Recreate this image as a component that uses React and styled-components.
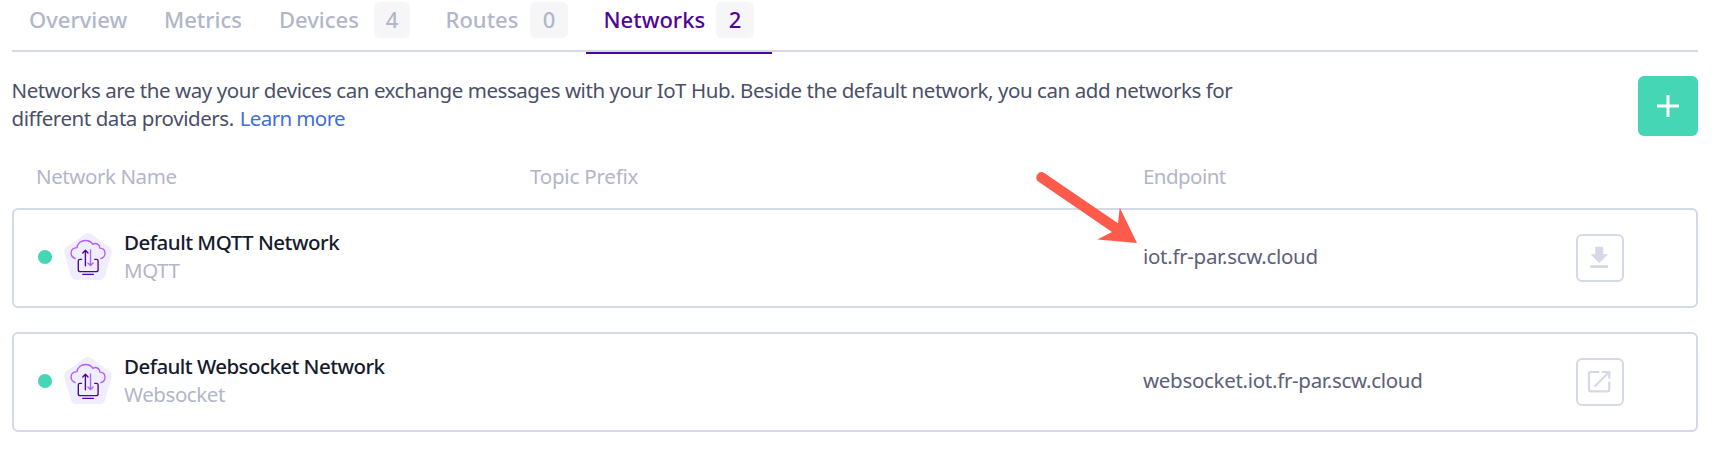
import React from "react";
import styled, { createGlobalStyle } from "styled-components";

const GlobalStyle = createGlobalStyle`
  * { box-sizing: border-box; }
  body {
    margin: 0;
    background: #fff;
    font-family: "Noto Sans", "Open Sans", sans-serif;
    font-size: 20.5px;
    line-height: 28px;
    letter-spacing: -0.44px;
    color: #4a4f68;
  }
`;

const Page = styled.main`
  position: relative;
  width: 1714px;
  height: 452px;
  padding: 0 16px 0 12px;
  overflow: hidden;
`;

const TabList = styled.nav`
  display: grid;
  grid-template-columns: 134px 115px 167px 158px 186px;
  height: 52px;
  border-bottom: 2px solid #d4d9e8;
`;

const Tab = styled.a`
  display: flex;
  align-items: center;
  justify-content: space-between;
  height: 54px;
  padding: 0 18px 14px ${(p) => p.$indent}px;
  border-bottom: 2px solid ${(p) => (p.$active ? "#4f0599" : "transparent")};
  color: ${(p) => (p.$active ? "#4f0599" : "#b2b6c9")};
  font-size: 22px;
  font-weight: 500;
  letter-spacing: 0;
`;

const Badge = styled.span`
  width: ${(p) => p.$width}px;
  height: 36px;
  margin-top: 2px;
  border-radius: 6px;
  background: #f6f6f9;
  line-height: 35px;
  text-align: center;
`;

const Intro = styled.section`
  display: flex;
  justify-content: space-between;
  height: 60px;
  margin-top: 24px;
`;

const Description = styled.p`
  width: 1280px;
  margin: 0 0 0 -0.5px;
`;

const Link = styled.a`
  margin-left: 1px;
  color: #3f6ed8;
  letter-spacing: -0.6px;
`;

const AddButton = styled.button`
  display: grid;
  place-items: center;
  width: 60px;
  height: 60px;
  padding: 0;
  border: 0;
  border-radius: 6px;
  background: #45d6b5;
`;

const columns = "494px 613px 433px 48px";

const TableHead = styled.div`
  display: grid;
  grid-template-columns: ${columns};
  margin: 26px 0 18px;
  padding-left: 24px;
  color: #b2b6c9;
`;

const HeadCell = styled.span`
  letter-spacing: ${(p) => p.$tracking}px;
`;

const Row = styled.article`
  display: grid;
  grid-template-columns: ${columns};
  align-items: center;
  height: 100px;
  margin-bottom: 24px;
  padding-left: 22px;
  border: 2px solid #d4d9e8;
  border-radius: 6px;
`;

const NameCell = styled.div`
  display: flex;
  align-items: center;
  padding: 0 0 2px 2px;
`;

const StatusDot = styled.span`
  width: 14px;
  height: 14px;
  margin-right: 12px;
  border-radius: 50%;
  background: #45d6b5;
`;

const Names = styled.div`
  margin: 0 0 2px 12px;
  color: #b2b6c9;
`;

const Title = styled.div`
  color: #151a2d;
  font-weight: 500;
  letter-spacing: ${(p) => p.$tracking}px;
`;

const Endpoint = styled.div`
  grid-column: 3;
  padding-bottom: 4px;
  color: #5c6079;
  letter-spacing: -0.3px;
`;

const RowAction = styled.button`
  display: grid;
  place-items: center;
  width: 48px;
  height: 48px;
  padding: 0;
  border: 2px solid #d4d9e8;
  border-radius: 6px;
  background: #fff;
  color: #d4d9e8;
`;

const Pointer = styled.svg`
  position: absolute;
  left: 1030px;
  top: 165px;
`;

const NetworkIcon = () => (
  <svg width="48" height="48" viewBox="0 0 48 48" fill="none" strokeLinecap="round" strokeLinejoin="round">
    <path d="M20.7 1 Q24-.8 27.3 1 L45.8 14.6 Q48.6 16.7 47.7 20 L41.2 42.7 Q39.8 46.8 35.8 47 H12.2 Q8.2 46.8 6.8 42.7 L.3 20 Q-.6 16.7 2.2 14.6Z" fill="#eeeeff" />
    <g strokeWidth="1.35">
      <path stroke="#b45cff" d="M11.2 25.6C8.6 24.6 7.1 22.5 7.1 20.1C7.1 17 9.3 14.9 13 14.7C13.3 10.4 17.1 7.5 21.5 7.5C24.9 7.5 27.6 9 28.8 11.5C32.1 9.2 36 11.5 35.8 15.1C39 15.2 41 17.4 41 20.2C41 22.8 39.4 24.9 36.8 25.6" />
      <path stroke="#b45cff" d="M26.5 17V32.2M23.9 30L26.5 32.6L29.1 30" />
      <path stroke="#4f0599" d="M21.4 32.7V17.4M18.8 20L21.4 17.2L24 20M17.5 26.3H15.9Q14.3 26.3 14.3 27.9V36.7Q14.3 38.6 16.2 38.6H32.2Q34.1 38.6 34.1 36.7V27.9Q34.1 26.3 32.5 26.3H30.7M18.8 41.4H29.3" />
    </g>
  </svg>
);

const DownloadIcon = () => (
  <svg width="28" height="28" viewBox="0 0 28 28" fill="currentColor">
    <path d="M9.2 2.7H17.2V10.2H22.1L13.2 18.9L4.4 10.2H9.2Z" />
    <rect x="4.1" y="21.2" width="17.8" height="2.7" />
  </svg>
);

const OpenIcon = () => (
  <svg width="28" height="28" viewBox="0 0 28 28" fill="none" stroke="currentColor" strokeWidth="2.2">
    <path d="M13.2 4H5.1Q3 4 3 6.1V21.2Q3 23.3 5.1 23.3H21.2Q23.3 23.3 23.3 21.2V13.8M16 4H23.3V10.6M23 4.3L8.6 18.5" />
  </svg>
);

const tabs = [
  { label: "Overview", indent: 17 },
  { label: "Metrics", indent: 18 },
  { label: "Devices", indent: 18, count: 4, width: 36 },
  { label: "Routes", indent: 17.5, count: 0, width: 38 },
  { label: "Networks", indent: 17.5, count: 2, width: 38, active: true },
];

const networks = [
  { title: "Default MQTT Network", kind: "MQTT", endpoint: "iot.fr-par.scw.cloud", tracking: -0.5, Icon: DownloadIcon, action: "Download" },
  { title: "Default Websocket Network", kind: "Websocket", endpoint: "websocket.iot.fr-par.scw.cloud", tracking: -0.56, Icon: OpenIcon, action: "Open" },
];

export default function App() {
  return (
    <Page>
      <GlobalStyle />
      <TabList>
        {tabs.map((t) => (
          <Tab key={t.label} $active={t.active} $indent={t.indent}>
            <span>{t.label}</span>
            {t.count !== undefined && <Badge $width={t.width}>{t.count}</Badge>}
          </Tab>
        ))}
      </TabList>
      <Intro>
        <Description>
          Networks are the way your devices can exchange messages with your IoT Hub. Beside the default network, you can add networks for
          <br />
          different data providers. <Link>Learn more</Link>
        </Description>
        <AddButton aria-label="Add network">
          <svg width="22" height="22" viewBox="0 0 22 22" stroke="#fff" strokeWidth="3">
            <path d="M11 0V22M0 11H22" />
          </svg>
        </AddButton>
      </Intro>
      <TableHead>
        <HeadCell $tracking={-0.42}>Network Name</HeadCell>
        <HeadCell $tracking={-0.2}>Topic Prefix</HeadCell>
        <HeadCell $tracking={-0.55}>Endpoint</HeadCell>
      </TableHead>
      {networks.map(({ title, kind, endpoint, tracking, Icon, action }) => (
        <Row key={title}>
          <NameCell>
            <StatusDot />
            <NetworkIcon />
            <Names>
              <Title $tracking={tracking}>{title}</Title>
              <div>{kind}</div>
            </Names>
          </NameCell>
          <Endpoint>{endpoint}</Endpoint>
          <RowAction aria-label={action}>
            <Icon />
          </RowAction>
        </Row>
      ))}
      <Pointer width="112" height="82" viewBox="0 0 112 82" fill="#ff5b4c">
        <path d="M14.3 7.9L88 58.2L89.7 42.4L107 78L67.3 74.6L82 66.9L8.2 16.5A5.3 5.3 0 0 1 14.3 7.9Z" />
      </Pointer>
    </Page>
  );
}
